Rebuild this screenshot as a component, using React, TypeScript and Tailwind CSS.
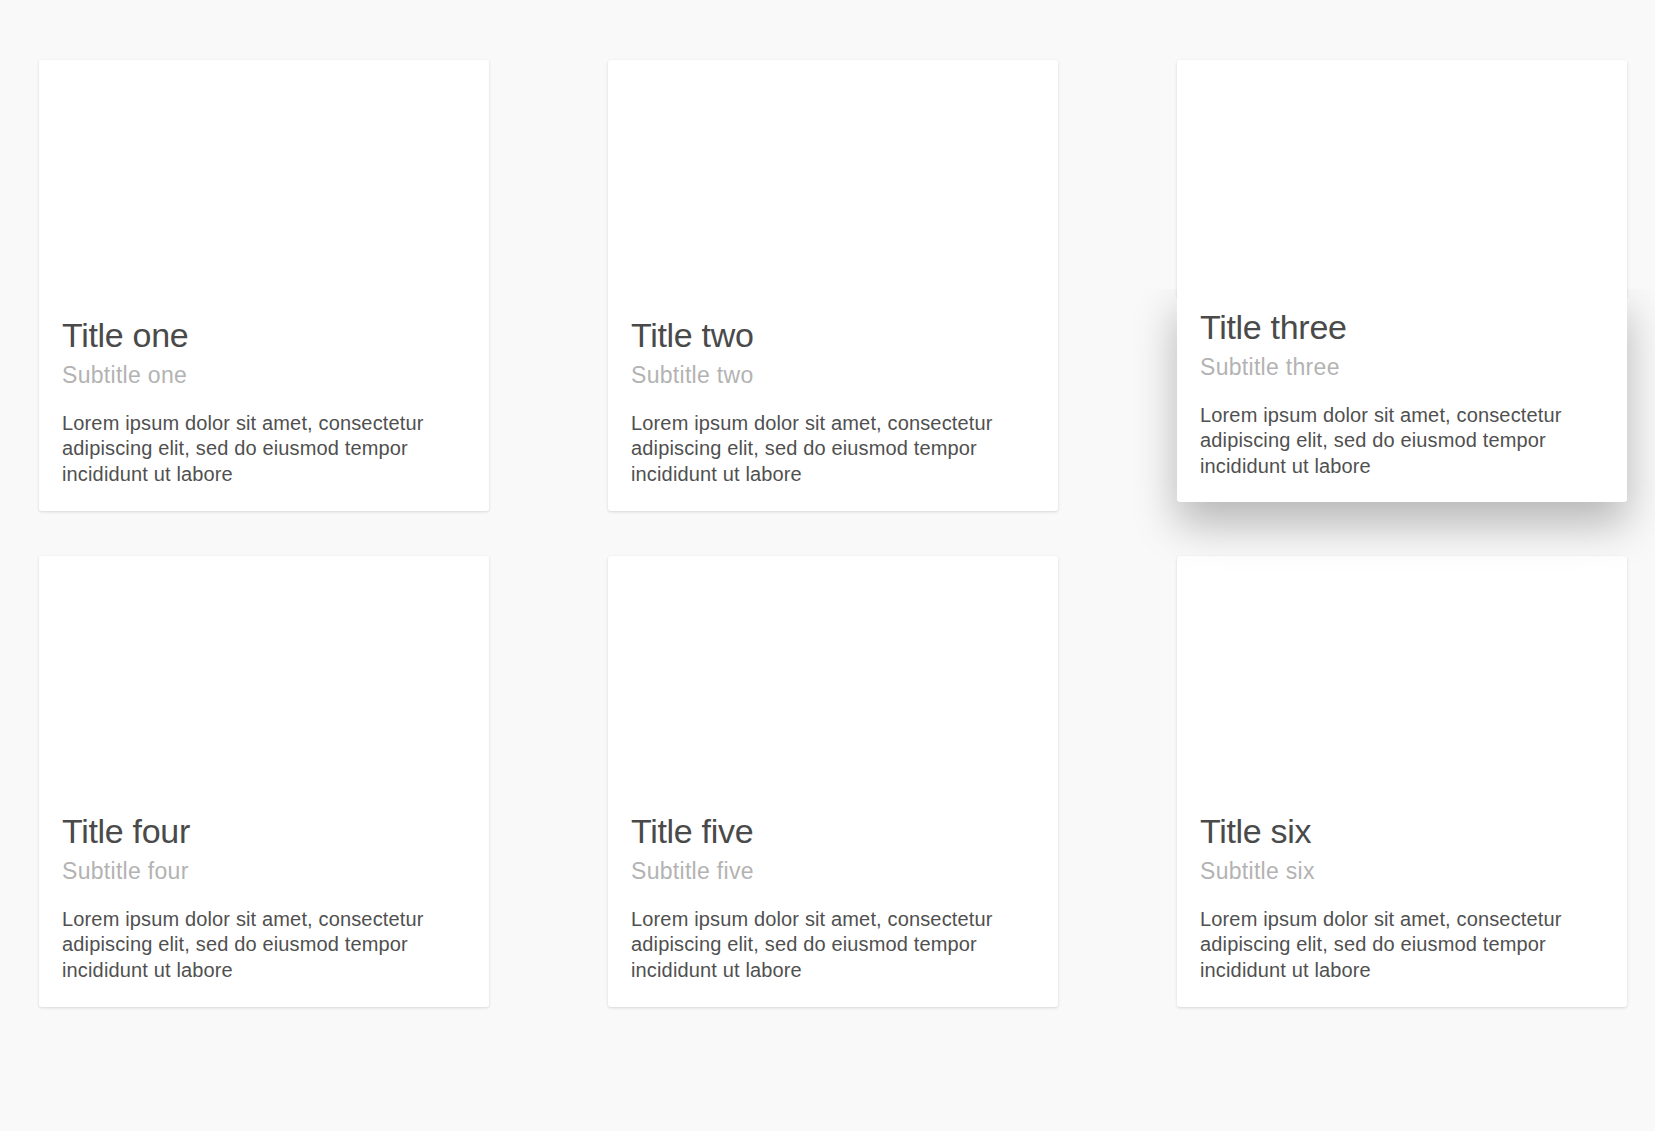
const CARDS = [
  { title: "Title one", subtitle: "Subtitle one" },
  { title: "Title two", subtitle: "Subtitle two" },
  { title: "Title three", subtitle: "Subtitle three", raised: true },
  { title: "Title four", subtitle: "Subtitle four" },
  { title: "Title five", subtitle: "Subtitle five" },
  { title: "Title six", subtitle: "Subtitle six" },
]

const BODY = "Lorem ipsum dolor sit amet, consectetur adipiscing elit, sed do eiusmod tempor incididunt ut labore"

function Card({ title, subtitle, raised }: { title: string; subtitle: string; raised?: boolean }) {
  if (raised) {
    return (
      <div className="relative flex flex-col h-[451px]">
        {/* media area */}
        <div className="h-[237px] bg-white rounded-t-[3px] shadow-[0_1px_3px_rgba(0,0,0,0.14)]" />
        {/* lifted content, shadow cut off at its top edge */}
        <div className="relative -translate-y-2 bg-white rounded-b-[3px] shadow-[0_22px_44px_rgba(0,0,0,0.27)] [clip-path:inset(0_-300px_-300px_-300px)]">
          <CardBody title={title} subtitle={subtitle} />
        </div>
      </div>
    )
  }

  return (
    <div className="flex flex-col h-[451px] bg-white rounded-[3px] shadow-[0_1px_3px_rgba(0,0,0,0.14)]">
      <div className="h-[237px]" />
      <CardBody title={title} subtitle={subtitle} />
    </div>
  )
}

function CardBody({ title, subtitle }: { title: string; subtitle: string }) {
  return (
    <div className="px-[23px] pt-[17.5px] pb-[23px]">
      <h2 className="text-[34px] leading-[40px] tracking-[-0.3px] text-[#4a4a4a]">{title}</h2>
      <p className="mt-[6px] text-[23px] leading-[28px] tracking-[0.3px] text-[#b3b3b3]">{subtitle}</p>
      <p className="mt-[22.5px] text-[20px] leading-[25.33px] tracking-[0.15px] text-[#505050] pr-[10px]">{BODY}</p>
    </div>
  )
}

export default function App() {
  return (
    <div className="min-h-[1131px] bg-[#f9f9f9] font-['Liberation_Sans',Arial,sans-serif]">
      <div className="grid grid-cols-[repeat(3,450px)] gap-x-[119px] gap-y-[45px] pl-[39px] pt-[60px]">
        {CARDS.map((c) => (
          <Card key={c.title} {...c} />
        ))}
      </div>
    </div>
  )
}
